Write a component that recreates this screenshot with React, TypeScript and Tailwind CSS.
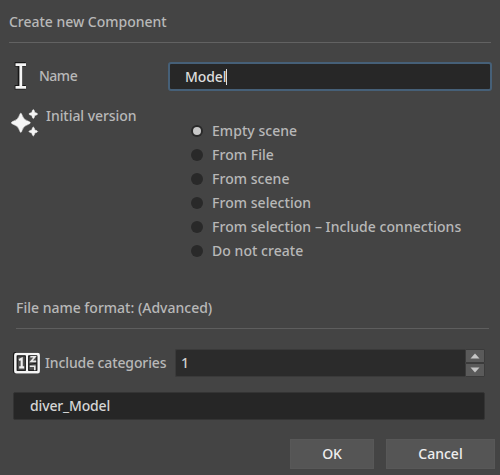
import React from "react";

const options = [
  "Empty scene",
  "From File",
  "From scene",
  "From selection",
  "From selection – Include connections",
  "Do not create",
];

function TextCursorIcon() {
  return (
    <svg width="14" height="28" viewBox="0 0 14 28" className="shrink-0">
      <path d="M0.7 2.3H11.7M6 2V26M0.7 25.3H11.7" stroke="#171717" strokeWidth="4.5" fill="none" />
      <path d="M1.5 2.7H12M6.8 2V26M1.5 25.4H12" stroke="#f5f5f5" strokeWidth="2.8" fill="none" />
    </svg>
  );
}

function SparklesIcon() {
  return (
    <svg width="28" height="28" viewBox="0 0 28 28" className="shrink-0" fill="#f5f5f5" stroke="#f5f5f5" strokeWidth="0.5">
      <path d="M9.8 4.2Q10.6 4.2 11 6Q12.3 11 17.5 12.3Q19.4 13.1 19.4 13.8Q19.4 14.5 17.5 15.3Q12.3 16.6 11 21.6Q10.6 23.4 9.8 23.4Q9 23.4 8.6 21.6Q7.3 16.6 2.1 15.3Q0.3 14.5 0.3 13.8Q0.3 13.1 2.1 12.3Q7.3 11 8.6 6Q9 4.2 9.8 4.2Z" />
      <path d="M22.3 0.5Q23.2 0.5 23.8 3.5Q26.7 4.1 26.7 5Q26.7 5.9 23.8 6.5Q23.2 9.5 22.3 9.5Q21.4 9.5 20.8 6.5Q17.9 5.9 17.9 5Q17.9 4.1 20.8 3.5Q21.4 0.5 22.3 0.5Z" />
      <path d="M22.3 18Q23.2 18 23.8 21Q26.7 21.6 26.7 22.5Q26.7 23.4 23.8 24Q23.2 27 22.3 27Q21.4 27 20.8 24Q17.9 23.4 17.9 22.5Q17.9 21.6 20.8 21Q21.4 18 22.3 18Z" />
    </svg>
  );
}

function CounterIcon() {
  return (
    <svg width="28" height="23" viewBox="0 0 28 23" className="shrink-0">
      <rect x="0" y="0" width="26" height="21.5" rx="2.5" fill="#171717" />
      <rect x="2.4" y="2" width="23.2" height="18.2" rx="1" fill="#3f3f3f" stroke="#f5f5f5" strokeWidth="2.6" />
      <path d="M14 2V20" stroke="#f5f5f5" strokeWidth="2.4" />
      <path d="M4.3 4H12.3V18.3H4.3ZM15.7 4H23.8V18.3H15.7Z" fill="#505050" stroke="#1b1b1b" />
      <path d="M6 8L8.7 6.7V15.2M6.2 15.4H11.2" stroke="#eee" strokeWidth="2.1" fill="none" />
      <path d="M17.3 4.8H22L18 9.4H23.2" stroke="#e8e8e8" strokeWidth="1.6" fill="none" />
      <path d="M16.8 14.2H21.8V18.3" stroke="#e8e8e8" strokeWidth="1.6" fill="none" />
      <path d="M16.5 12.4L23.5 11.2" stroke="#1b1b1b" />
    </svg>
  );
}

function StepButton({ down = false }: { down?: boolean }) {
  return (
    <button className="flex h-[14px] w-[20px] items-center justify-center rounded-[1px] border border-[#3b3b3b] bg-[#5a5a5a]">
      <svg width="10" height="6" viewBox="0 0 10 6">
        <path d={down ? "M0.5 0.5H9.5L5 5.5Z" : "M0.5 5.5H9.5L5 0.5Z"} fill="#c5c5c5" />
      </svg>
    </button>
  );
}

export default function App() {
  return (
    <main className="h-[475px] w-[500px] overflow-hidden bg-[#444444] font-['Noto_Sans','Open_Sans',sans-serif] text-[14px] font-medium leading-6 text-[#b8b8b8]">
      <header className="ml-[9px] h-[43px] w-[482px] border-b border-[#626262] pt-[10px] tracking-[-0.02px]">
        Create new Component
      </header>
      <section className="flex h-[54px] pl-[14px] pt-[19px]">
        <div className="flex h-[28px] w-[154px] items-center">
          <TextCursorIcon />
          <label className="ml-[11px] tracking-[-0.5px]">Name</label>
        </div>
        <div className="flex h-[29px] w-[324px] items-center rounded-[3px] border-2 border-[#466078] bg-[#272727] pl-[15px] text-[#dddddd]">
          <span className="tracking-[-0.1px]">Model</span>
          <i className="h-4 w-px bg-[#e0e0e0]" />
        </div>
      </section>
      <section className="flex h-[194px] pl-[11px]">
        <div className="flex w-[180px] pt-[12px]">
          <SparklesIcon />
          <span className="-mt-[5px] ml-[7px] tracking-[-0.05px]">Initial version</span>
        </div>
        <div className="flex flex-col pt-[22px]">
          {options.map((label, i) => (
            <label key={label} className="flex h-6 items-center">
              <span className="flex size-[12px] items-center justify-center rounded-full bg-[#292929]">
                {i === 0 && <span className="size-[8px] rounded-full bg-[#c8c8c8]" />}
              </span>
              <span className="ml-[9px] whitespace-nowrap tracking-[0.05px]">{label}</span>
            </label>
          ))}
        </div>
      </section>
      <div className="ml-4 h-[38px] w-[473px] border-b border-[#5e5e5e] pt-[5px]">
        File name format: (Advanced)
      </div>
      <section className="mt-[19px] flex h-[30px] items-center pl-[13px]">
        <CounterIcon />
        <label className="ml-[4px] w-[130px] whitespace-nowrap tracking-[-0.12px]">Include categories</label>
        <div className="flex h-[28px] w-[290px] items-center rounded-l-[2px] border border-r-0 border-[#3a3a3a] bg-[#2b2b2b] pl-[5px] text-[#d0d0d0]">1</div>
        <div className="flex flex-col">
          <StepButton />
          <StepButton down />
        </div>
      </section>
      <div className="ml-[13px] mt-[14px] flex h-[28px] w-[472px] items-center rounded-[2px] border border-[#343434] bg-[#262626] pl-[16px] text-[#d5d5d5]">
        <span className="tracking-[-0.15px]">diver_Model</span>
      </div>
      <footer className="mt-[19px] flex justify-end gap-[12px] pr-[5px] text-[#eeeeee]">
        <button className="h-[30px] w-[84px] border border-[#585858] bg-[#555555] tracking-[-0.2px]">OK</button>
        <button className="h-[30px] w-[109px] border border-[#585858] bg-[#555555]">Cancel</button>
      </footer>
    </main>
  );
}
